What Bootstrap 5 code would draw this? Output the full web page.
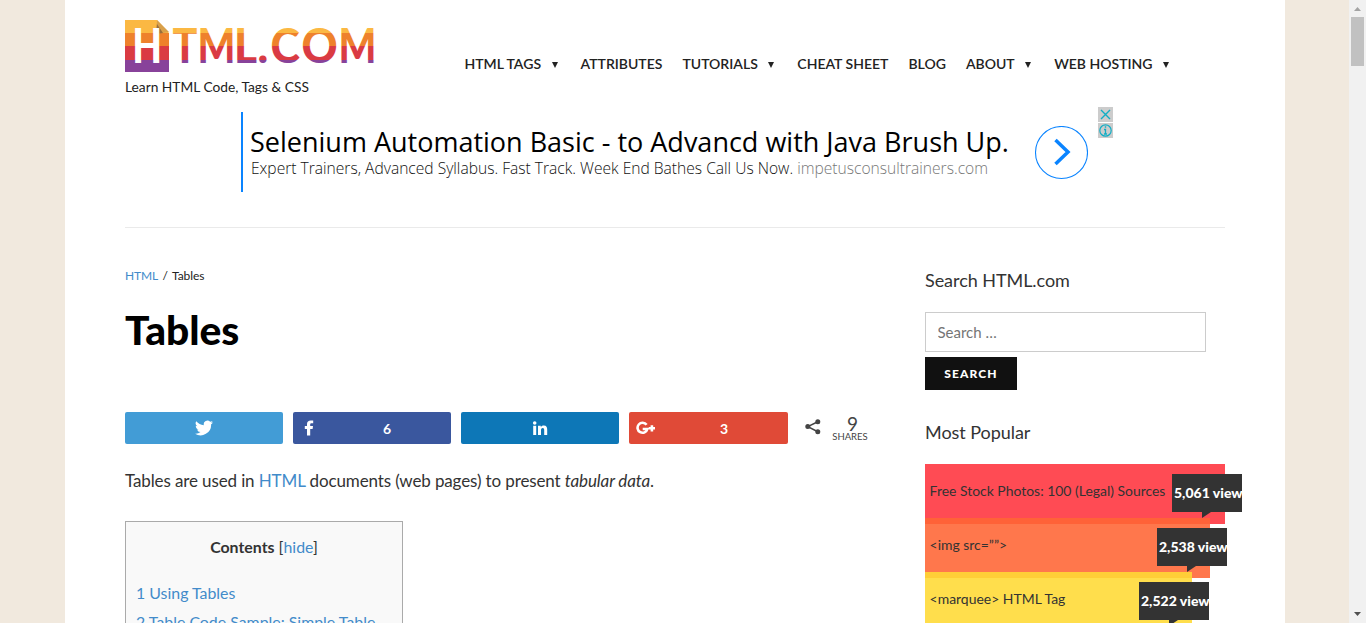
<!DOCTYPE html>
<html lang="en">
<head>
<meta charset="utf-8">
<meta name="viewport" content="width=device-width, initial-scale=1">
<title>Tables - HTML.com</title>
<link href="https://cdn.jsdelivr.net/npm/bootstrap@5.3.0/dist/css/bootstrap.min.css" rel="stylesheet">
<style>
body{font-family:Lato,"Liberation Sans",sans-serif;color:#333;background:#f1e9de;height:100vh;overflow:hidden}
a{color:#428bca;text-decoration:none}
svg{display:block}
.viewport-area{height:623px;overflow:hidden}
.sheet{width:1220px;margin-left:65px;padding:20px 60px 0;height:700px}
.site-head{height:92px}
.brand{width:339px}
.logo{overflow:visible}
.tagline{font-size:13.75px;line-height:20px;margin-top:5px;color:#222}
.main-nav{gap:20px;padding:33px 0 0 .4px}
.main-nav a{font-size:14.03px;line-height:22px;font-weight:600;color:#222;white-space:nowrap;display:flex;align-items:center}
.has-menu::after{content:"";border:3.5px solid transparent;border-top:6px solid #222;border-bottom:0;margin:1px 3px 0 10.5px}
.ad{width:872px;height:80px;margin-left:116px;border-left:2px solid #0a84ff;font-family:"Open Sans",sans-serif;padding-left:7px}
.ad-copy{width:784px;padding-top:11px;white-space:nowrap}
.ad-title{font-size:27px;line-height:36px;color:#000;padding-top:1px}
.ad-line{font-size:15.6px;line-height:20px;font-weight:300;color:#111;margin-top:-2px;padding-left:1px}
.ad-line span{color:#777}
.ad-icons{margin:-5px 0 0 10px;display:grid;gap:1px;align-content:start}
.rule{height:1px;background:#eaeaea;margin-top:35px}
.content{width:760px}
.crumbs{font-size:12px;line-height:18px;margin-top:39px;color:#222;letter-spacing:-.1px}
.crumbs span{margin:0 4.3px}
.page-title{font-size:40.7px;line-height:50px;font-weight:900;color:#000;margin:20px 0 57px}
.share{gap:10px;height:32px}
.share a{width:158px;height:32px;border-radius:2px;color:#fff;font-size:14px;font-weight:700;display:flex;align-items:center;justify-content:center}
.share .count{flex:1;text-align:center}
.total{width:36px;text-align:center;color:#444;font-size:19px;line-height:18px;margin-left:-3px;padding-top:3px}
.total span{display:block;padding-left:5px}
.total small{display:block;font-size:9.5px;line-height:10px;margin-top:-1px}
.intro{font-size:17px;line-height:26px;margin:24px 0 27px;letter-spacing:-.12px}
.toc{width:278px;height:240px;border:1px solid #aaa;background:#f9f9f9;padding:13px 10px;font-size:15.9px;line-height:24px}
.toc a{white-space:nowrap}
.toc ul{margin:22px 0 0;padding:0;list-style:none}
.toc li{margin-bottom:5px}
.side{width:300px;margin-left:40px}
.side h2{font-size:18px;line-height:26px;font-weight:400;letter-spacing:-.05px}
.search-field{width:281px;height:40px;border:1px solid #ccc;border-radius:0;padding:0 11.5px;font-size:15px}
.search-btn{width:92px;height:33px;margin-top:5px;border:0;border-radius:0;background:#111;color:#fff;font-size:12px;font-weight:900;letter-spacing:1.1px;padding:1px 0 0}
.bar{height:60px;margin-bottom:-6px;position:relative;padding:16px 4.600px;font-size:13.95px;line-height:22px;white-space:nowrap}
.bar a{color:#333}
.bar-red{background:#ff4b54;width:300px}
.bar-orange{background:rgba(255,102,53,.885);width:285px}
.bar-yellow{background:rgba(255,218,53,.885);width:267px}
.views{position:absolute;right:-17px;top:10px;width:70px;height:38px;background:#333;color:#fff;font-size:14px;font-weight:900;line-height:38px;padding-left:2px}
.views b{display:block;width:68px;overflow:hidden;font-weight:900}
.views::after{content:"";position:absolute;left:30px;top:38px;border-top:6px solid #333;border-right:9px solid transparent}
.scroller{width:17px;height:623px;background:#f1f1f1}
.thumb{width:13px;height:49px;background:#c1c1c1}
</style>
</head>
<body>
<div class="d-flex">
<div class="viewport-area flex-grow-1">
<div class="sheet bg-white">
  <header class="site-head d-flex">
    <div class="brand flex-shrink-0">
      <svg class="logo" width="251" height="52" viewBox="0 0 251 52">
        <defs>
          <linearGradient id="stripes" gradientUnits="userSpaceOnUse" x1="0" y1="0" x2="0" y2="52">
            <stop offset="0" stop-color="#fbb843"/><stop offset=".245" stop-color="#fbb843"/>
            <stop offset=".245" stop-color="#ee812c"/><stop offset=".5" stop-color="#ee812c"/>
            <stop offset=".5" stop-color="#da3b43"/><stop offset=".77" stop-color="#da3b43"/>
            <stop offset=".77" stop-color="#88429a"/><stop offset="1" stop-color="#88429a"/>
          </linearGradient>
        </defs>
        <path d="M0 0H32L44 13V52H0Z" fill="url(#stripes)"/>
        <path d="M32 0L44 12L31 14Z" fill="#d9a04a"/><path d="M32 4L31 14L38 13Z" fill="#735335" opacity=".65"/>
        <g font-family="Lato" font-weight="900" font-size="48" fill="url(#stripes)">
          <text transform="translate(7.300 0) scale(.82 1)" y="43" fill="#fff" font-size="47">H</text>
          <text transform="translate(47.500 0) scale(.86 1)" y="43">T</text>
          <text transform="translate(72.500 0) scale(.83 1)" y="43">M</text>
          <text transform="translate(109 0) scale(.92 1)" y="43">L</text>
          <text transform="translate(132.500 0) scale(.94 1)" y="43">.</text>
          <text transform="translate(145.500 0) scale(.93 1)" y="43">C</text>
          <text transform="translate(176.500 0) scale(.93 1)" y="43">O</text>
          <text transform="translate(213.500 0) scale(.83 1)" y="43">M</text>
        </g>
      </svg>
      <div class="tagline">Learn HTML Code, Tags &amp; CSS</div>
    </div>
    <nav class="main-nav d-flex align-items-start">
      <a class="has-menu" href="#">HTML TAGS</a><a href="#">ATTRIBUTES</a><a class="has-menu" href="#">TUTORIALS</a><a href="#">CHEAT SHEET</a><a href="#">BLOG</a><a class="has-menu" href="#">ABOUT</a><a class="has-menu" href="#">WEB HOSTING</a>
    </nav>
  </header>
  <div class="ad d-flex">
    <div class="ad-copy flex-shrink-0"><div class="ad-title">Selenium Automation Basic - to Advancd with Java Brush Up.</div>
      <div class="ad-line">Expert Trainers, Advanced Syllabus. Fast Track. Week End Bathes Call Us Now. <span>impetusconsultrainers.com</span></div></div>
    <svg class="flex-shrink-0" style="margin-top:14px" width="54" height="54" viewBox="0 0 54 54" fill="none" stroke="#0a84ff"><circle cx="27.5" cy="26.5" r="26" stroke-width="1.1"/><path d="M21.500 14L34 26L21.500 38" stroke-width="3.5"/></svg>
    <div class="ad-icons">
      <svg width="15" height="15"><path d="M0 0H15V15H0Z" fill="#ccc"/><path d="M3 3L12 12M12 3L3 12" stroke="#10aec5" stroke-width="1.4"/></svg>
      <svg width="15" height="15"><path d="M0 0H15V15H0Z" fill="#ccc"/><circle cx="7.5" cy="7.5" r="5.7" fill="none" stroke="#10aec5" stroke-width="1.200"/><path d="M6.800 4h1.4M6 6.5h1.5V11M6 11h3" fill="none" stroke="#10aec5" stroke-width="1.3"/></svg>
    </div>
  </div>
  <div class="rule"></div>
  <div class="d-flex">
    <main class="content">
      <div class="crumbs"><a href="#">HTML</a><span>/</span>Tables</div>
      <h1 class="page-title">Tables</h1>
      <div class="share d-flex">
        <a href="#" style="background:#429cd6"><svg width="18" height="16" viewBox="0 0 24 20"><path fill="#fff" d="M24 2.4c-.9.4-1.8.7-2.8.8a4.9 4.9 0 0 0 2.1-2.7c-1 .5-2 1-3.1 1.2a4.9 4.9 0 0 0-8.4 4.5A14 14 0 0 1 1.7 1a4.9 4.9 0 0 0 1.5 6.6A4.8 4.8 0 0 1 1 7v.1a4.9 4.9 0 0 0 3.9 4.8 5 5 0 0 1-2.2.1 4.9 4.9 0 0 0 4.6 3.4A9.9 9.9 0 0 1 0 17.5a14 14 0 0 0 21.5-12.4c1-.7 1.8-1.6 2.5-2.7Z"/></svg></a>
        <a href="#" style="background:#3a579e"><svg class="ms-2 me-3" width="16" height="16" viewBox="0 0 16 16"><path fill="#fff" d="M6 15.5V9H3.8V6H6V4.1C6 1.5 7.4.4 9.8.4c1 0 2 .1 2.4.2v2.7h-1.7c-1.1 0-1.3.6-1.3 1.3V6H12l-.4 3H9.2v6.500Z"/></svg><span class="count" style="padding-right:10px">6</span></a>
        <a href="#" style="background:#0d77b7"><svg width="16" height="16" viewBox="0 0 16 16"><g fill="#fff"><circle cx="2.7" cy="3" r="1.800"/><path d="M1.200 5.700h3V15h-3ZM6 5.700h2.800V7c.5-.9 1.500-1.600 3-1.600 2.700 0 3.400 1.700 3.400 4.200V15h-3v-4.800c0-1.200-.2-2.300-1.500-2.300s-1.700 1-1.700 2.300V15H6Z"/></g></svg></a>
        <a href="#" style="background:#e04a37;width:159px"><svg style="margin:2px 0 0 7px" width="20" height="16" viewBox="0 0 20 16" fill="none" stroke="#fff" stroke-width="2.600"><path d="M10.600 3.800A5 5 0 1 0 11.400 8H6.700M12.800 7.300H19M15.900 4.200V10.400"/></svg><span class="count ps-1">3</span></a>
        <svg style="margin:7px 4px 0 7px" width="16" height="16" viewBox="0 0 16 16"><g fill="#444"><path d="M2.800 7.600L12.800 2.700M2.800 7.600L12.800 12.800" stroke="#444" stroke-width="1.600"/><circle cx="2.800" cy="7.600" r="2.500"/><circle cx="12.800" cy="2.700" r="2.500"/><circle cx="12.800" cy="12.800" r="2.500"/></g></svg>
        <div class="total"><span>9</span><small>SHARES</small></div>
      </div>
      <p class="intro">Tables are used in <a href="#">HTML</a> documents (web pages) to present <em>tabular data</em>.</p>
      <div class="toc"><div class="text-center"><b>Contents</b> [<a href="#">hide</a>]</div>
        <ul><li><a href="#">1 Using Tables</a></li><li><a href="#">2 Table Code Sample: Simple Table</a></li></ul></div>
    </main>
    <aside class="side">
      <h2 style="margin:39px 0 19px">Search HTML.com</h2>
      <input class="search-field d-block" placeholder="Search …" aria-label="Search">
      <button class="search-btn d-block">SEARCH</button>
      <h2 style="margin:29px 0 19px">Most Popular</h2>
      <div class="bar bar-red"><a href="#">Free Stock Photos: 100 (Legal) Sources</a><div class="views"><b>5,061 views</b></div></div>
      <div class="bar bar-orange"><a href="#">&lt;img src=””&gt;</a><div class="views"><b>2,538 views</b></div></div>
      <div class="bar bar-yellow"><a href="#">&lt;marquee&gt; HTML Tag</a><div class="views"><b>2,522 views</b></div></div>
    </aside>
  </div>
</div>
</div>
<div class="scroller d-flex flex-column align-items-center flex-shrink-0">
  <svg width="17" height="17"><path d="M5 11L8.500 7L12 11Z" fill="#a3a3a3"/></svg>
  <div class="thumb"></div>
  <svg class="mt-auto" width="17" height="17"><path d="M5 6L8.500 10L12 6Z" fill="#505050"/></svg>
</div>
</div>
<script src="https://cdn.jsdelivr.net/npm/bootstrap@5.3.0/dist/js/bootstrap.bundle.min.js"></script>
</body>
</html>
